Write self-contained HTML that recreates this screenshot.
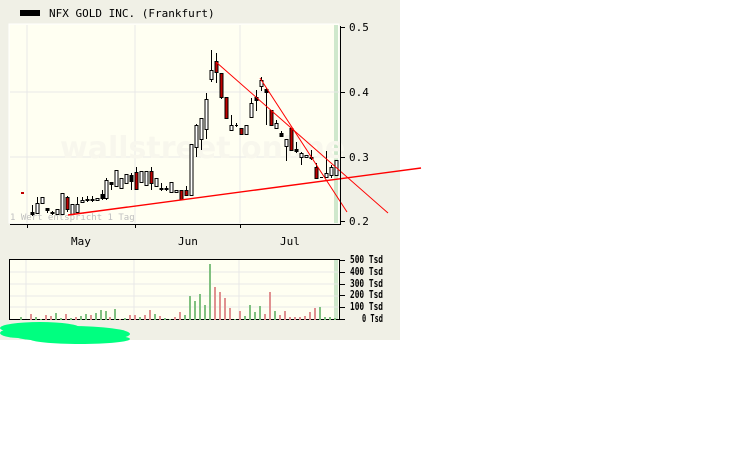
<!DOCTYPE html>
<html><head><meta charset="utf-8"><style>
html,body{margin:0;padding:0;background:#fff;width:738px;height:475px;overflow:hidden}
svg{display:block}
text{font-family:"DejaVu Sans Mono","Liberation Mono",monospace;font-size:11px;fill:#000}
</style></head><body>
<svg width="738" height="475" viewBox="0 0 738 475" xmlns="http://www.w3.org/2000/svg">
<rect x="0" y="0" width="400" height="340" fill="#f0f0e6"/>
<rect x="20" y="10" width="20" height="6" fill="#000"/>
<text x="49" y="17">NFX GOLD INC. (Frankfurt)</text>
<!-- price panel -->
<rect x="9" y="24" width="330" height="199" fill="#fffff2" stroke="#fff" stroke-width="1"/>
<rect x="334" y="25" width="4" height="198" fill="#cfe8cc"/>
<g stroke="#e8e8e8" stroke-width="1" shape-rendering="crispEdges">
<line x1="27" y1="25" x2="27" y2="223"/><line x1="135" y1="25" x2="135" y2="223"/><line x1="240" y1="25" x2="240" y2="223"/>
<line x1="10" y1="92" x2="339" y2="92"/><line x1="10" y1="157" x2="339" y2="157"/>
</g>
<text x="60" y="158" style="font-family:'DejaVu Sans','Liberation Sans',sans-serif;font-size:30px;font-weight:bold;fill:#f8f7ed">wallstreet online</text>
<text x="10" y="220" style="font-size:9px;fill:#c0c0c0">1 Wert entspricht 1 Tag</text>
<g shape-rendering="crispEdges" stroke="#000" stroke-width="1">
<rect x="21.5" y="192.5" width="2" height="1" fill="#c00000" stroke="#c00000"/>
<line x1="32.5" y1="205" x2="32.5" y2="216"/><rect x="31" y="212.5" width="3" height="2" fill="#000"/>
<line x1="37.5" y1="197" x2="37.5" y2="214"/><rect x="36" y="203.5" width="3" height="10" fill="#fff"/>
<rect x="41" y="197.5" width="3" height="6" fill="#fff"/>
<line x1="47.5" y1="208" x2="47.5" y2="213"/><rect x="46" y="208.5" width="3" height="2" fill="#000"/>
<line x1="52.5" y1="211" x2="52.5" y2="215"/><rect x="51" y="212.5" width="3" height="1" fill="#000"/>
<rect x="56" y="209.5" width="3" height="5" fill="#fff"/>
<rect x="61" y="193.5" width="3" height="21" fill="#fff"/>
<line x1="67.5" y1="196" x2="67.5" y2="212"/><rect x="66" y="197.5" width="3" height="12" fill="#c00000"/>
<rect x="71" y="204.5" width="3" height="10" fill="#fff"/>
<line x1="77.5" y1="197" x2="77.5" y2="213"/><rect x="76" y="204.5" width="3" height="8" fill="#fff"/>
<line x1="82.5" y1="197" x2="82.5" y2="203"/><rect x="81" y="200.5" width="3" height="2" fill="#fff"/>
<line x1="87.5" y1="196" x2="87.5" y2="202"/><rect x="86" y="199.5" width="3" height="1" fill="#000"/>
<line x1="92.5" y1="196" x2="92.5" y2="202"/><rect x="91" y="199.5" width="3" height="1" fill="#000"/>
<rect x="96" y="198.5" width="3" height="2" fill="#fff"/>
<line x1="102.5" y1="190" x2="102.5" y2="200"/><rect x="101" y="194.5" width="3" height="4" fill="#000"/>
<line x1="106.5" y1="178" x2="106.5" y2="200"/><rect x="105" y="180.5" width="3" height="18" fill="#fff"/>
<line x1="111.5" y1="182" x2="111.5" y2="190"/><rect x="110" y="182.5" width="3" height="2" fill="#000"/>
<rect x="115" y="170.5" width="3" height="16" fill="#fff"/>
<rect x="120" y="178.5" width="3" height="10" fill="#fff"/>
<rect x="125" y="174.5" width="3" height="9" fill="#fff"/>
<line x1="131.5" y1="173" x2="131.5" y2="190"/><rect x="130" y="175.5" width="3" height="6" fill="#000"/>
<line x1="136.5" y1="167" x2="136.5" y2="190"/><rect x="135" y="172.5" width="3" height="17" fill="#c00000"/>
<rect x="140" y="171.5" width="3" height="11" fill="#fff"/>
<rect x="145" y="171.5" width="3" height="14" fill="#fff"/>
<line x1="151.5" y1="167" x2="151.5" y2="190"/><rect x="150" y="171.5" width="3" height="12" fill="#c00000"/>
<rect x="155" y="178.5" width="3" height="8" fill="#fff"/>
<line x1="161.5" y1="183" x2="161.5" y2="191"/><rect x="160" y="188.5" width="3" height="1" fill="#000"/>
<line x1="166.5" y1="186" x2="166.5" y2="191"/><rect x="165" y="188.5" width="3" height="1" fill="#000"/>
<rect x="170" y="182.5" width="3" height="10" fill="#fff"/>
<rect x="175" y="190.5" width="3" height="2" fill="#fff"/>
<line x1="181.5" y1="190" x2="181.5" y2="200"/><rect x="180" y="190.5" width="3" height="9" fill="#c00000"/>
<line x1="186.5" y1="186" x2="186.5" y2="196"/><rect x="185" y="190.5" width="3" height="5" fill="#c00000"/>
<rect x="190" y="144.5" width="3" height="51" fill="#fff"/>
<line x1="196.5" y1="124" x2="196.5" y2="157"/><rect x="195" y="125.5" width="3" height="22" fill="#fff"/>
<line x1="201.5" y1="118" x2="201.5" y2="150"/><rect x="200" y="118.5" width="3" height="21" fill="#fff"/>
<line x1="206.5" y1="93" x2="206.5" y2="139"/><rect x="205" y="99.5" width="3" height="30" fill="#fff"/>
<line x1="211.5" y1="50" x2="211.5" y2="82"/><rect x="210" y="70.5" width="3" height="9" fill="#fff"/>
<line x1="216.5" y1="53" x2="216.5" y2="83"/><rect x="215" y="61.5" width="3" height="11" fill="#c00000"/>
<line x1="221.5" y1="73" x2="221.5" y2="99"/><rect x="220" y="73.5" width="3" height="24" fill="#c00000"/>
<rect x="225" y="97.5" width="3" height="21" fill="#c00000"/>
<line x1="231.5" y1="115" x2="231.5" y2="131"/><rect x="230" y="125.5" width="3" height="5" fill="#fff"/>
<line x1="236.5" y1="123" x2="236.5" y2="127"/><line x1="235" y1="125.5" x2="238" y2="125.5"/>
<rect x="240" y="128.5" width="3" height="6" fill="#c00000"/>
<rect x="245" y="125.5" width="3" height="9" fill="#fff"/>
<line x1="251.5" y1="98" x2="251.5" y2="117"/><rect x="250" y="103.5" width="3" height="14" fill="#fff"/>
<line x1="256.5" y1="90" x2="256.5" y2="111"/><rect x="255" y="97.5" width="3" height="3" fill="#000"/>
<line x1="261.5" y1="77" x2="261.5" y2="91"/><rect x="260" y="80.5" width="3" height="6" fill="#fff"/>
<line x1="266.5" y1="88" x2="266.5" y2="125"/><rect x="265" y="89.5" width="3" height="3" fill="#000"/>
<rect x="270" y="110.5" width="3" height="15" fill="#c00000"/>
<line x1="276.5" y1="120" x2="276.5" y2="128"/><rect x="275" y="123.5" width="3" height="5" fill="#fff"/>
<line x1="281.5" y1="131" x2="281.5" y2="137"/><rect x="280" y="133.5" width="3" height="3" fill="#000"/>
<line x1="286.5" y1="139" x2="286.5" y2="161"/><rect x="285" y="139.5" width="3" height="7" fill="#fff"/>
<rect x="290" y="128.5" width="3" height="22" fill="#c00000"/>
<line x1="296.5" y1="142" x2="296.5" y2="153"/><rect x="295" y="149.5" width="3" height="2" fill="#000"/>
<line x1="301.5" y1="152" x2="301.5" y2="165"/><rect x="300" y="153.5" width="3" height="4" fill="#fff"/>
<rect x="305" y="155.5" width="3" height="2" fill="#fff"/>
<line x1="311.5" y1="150" x2="311.5" y2="160"/><rect x="310" y="157.5" width="3" height="1" fill="#000"/>
<line x1="316.5" y1="163" x2="316.5" y2="178"/><rect x="315" y="167.5" width="3" height="11" fill="#c00000"/>
<line x1="320" y1="177.5" x2="323" y2="177.5"/>
<line x1="326.5" y1="151" x2="326.5" y2="178"/><rect x="325" y="173.5" width="3" height="4" fill="#fff"/>
<line x1="331.5" y1="165" x2="331.5" y2="178"/><rect x="330" y="167.5" width="3" height="8" fill="#fff"/>
<rect x="335" y="160.5" width="3" height="15" fill="#fff"/>
</g>
<g stroke="#ff0000" fill="none">
<line x1="68" y1="215" x2="421" y2="168" stroke-width="1.4"/>
<line x1="216" y1="62" x2="388" y2="213"/>
<line x1="260" y1="78" x2="347" y2="212"/>
</g>
<g stroke="#000" shape-rendering="crispEdges">
<line x1="10" y1="224.5" x2="340" y2="224.5"/>
<line x1="340.5" y1="26" x2="340.5" y2="225"/>
<line x1="27.5" y1="224" x2="27.5" y2="228"/><line x1="135.5" y1="224" x2="135.5" y2="228"/><line x1="240.5" y1="224" x2="240.5" y2="228"/>
<line x1="340" y1="27.5" x2="345" y2="27.5"/><line x1="340" y1="92.5" x2="345" y2="92.5"/><line x1="340" y1="157.5" x2="345" y2="157.5"/><line x1="340" y1="221.5" x2="345" y2="221.5"/>
</g>
<text x="349" y="31">0.5</text><text x="349" y="96">0.4</text><text x="349" y="161">0.3</text><text x="349" y="225">0.2</text>
<text x="71" y="245">May</text><text x="178" y="245">Jun</text><text x="280" y="245">Jul</text>
<!-- volume panel -->
<rect x="9.5" y="259.5" width="330" height="60" fill="#fffff2" stroke="#000"/>
<rect x="334" y="260" width="4" height="59" fill="#cfe8cc"/>
<g stroke="#e8e8e8" shape-rendering="crispEdges">
<line x1="26" y1="260" x2="26" y2="319"/><line x1="134" y1="260" x2="134" y2="319"/><line x1="239" y1="260" x2="239" y2="319"/>
<line x1="10" y1="272" x2="339" y2="272"/><line x1="10" y1="284" x2="339" y2="284"/><line x1="10" y1="296" x2="339" y2="296"/><line x1="10" y1="307" x2="339" y2="307"/>
</g>
<g shape-rendering="crispEdges">
<g fill="#80c080">
<rect x="20" y="317" width="2" height="3"/><rect x="35" y="317" width="2" height="3"/><rect x="40" y="319" width="2" height="1"/><rect x="55" y="313" width="2" height="7"/><rect x="60" y="318" width="2" height="2"/><rect x="70" y="318" width="2" height="2"/><rect x="80" y="316" width="2" height="4"/><rect x="85" y="314" width="2" height="6"/><rect x="95" y="313" width="2" height="7"/><rect x="100" y="310" width="2" height="10"/><rect x="105" y="311" width="2" height="9"/><rect x="114" y="309" width="2" height="11"/><rect x="124" y="318" width="2" height="2"/><rect x="139" y="317" width="2" height="3"/><rect x="154" y="314" width="2" height="6"/><rect x="164" y="318" width="2" height="2"/><rect x="169" y="319" width="2" height="1"/><rect x="184" y="315" width="2" height="5"/><rect x="189" y="296" width="2" height="24"/><rect x="194" y="301" width="2" height="19"/><rect x="199" y="294" width="2" height="26"/><rect x="204" y="305" width="2" height="15"/><rect x="209" y="264" width="2" height="56"/><rect x="234" y="319" width="2" height="1"/><rect x="244" y="316" width="2" height="4"/><rect x="249" y="305" width="2" height="15"/><rect x="254" y="312" width="2" height="8"/><rect x="259" y="306" width="2" height="14"/><rect x="274" y="311" width="2" height="9"/><rect x="319" y="307" width="2" height="13"/><rect x="324" y="317" width="2" height="3"/><rect x="329" y="317" width="2" height="3"/><rect x="334" y="318" width="2" height="2"/>
</g>
<g fill="#e09090">
<rect x="30" y="314" width="2" height="6"/><rect x="45" y="315" width="2" height="5"/><rect x="50" y="316" width="2" height="4"/><rect x="65" y="314" width="2" height="6"/><rect x="75" y="317" width="2" height="3"/><rect x="90" y="315" width="2" height="5"/><rect x="109" y="317" width="2" height="3"/><rect x="119" y="319" width="2" height="1"/><rect x="129" y="315" width="2" height="5"/><rect x="134" y="315" width="2" height="5"/><rect x="144" y="315" width="2" height="5"/><rect x="149" y="310" width="2" height="10"/><rect x="159" y="316" width="2" height="4"/><rect x="174" y="317" width="2" height="3"/><rect x="179" y="312" width="2" height="8"/><rect x="214" y="287" width="2" height="33"/><rect x="219" y="292" width="2" height="28"/><rect x="224" y="298" width="2" height="22"/><rect x="229" y="308" width="2" height="12"/><rect x="239" y="311" width="2" height="9"/><rect x="264" y="314" width="2" height="6"/><rect x="269" y="292" width="2" height="28"/><rect x="279" y="315" width="2" height="5"/><rect x="284" y="311" width="2" height="9"/><rect x="289" y="317" width="2" height="3"/><rect x="294" y="317" width="2" height="3"/><rect x="299" y="317" width="2" height="3"/><rect x="304" y="316" width="2" height="4"/><rect x="309" y="312" width="2" height="8"/><rect x="314" y="308" width="2" height="12"/>
</g>
</g>
<g stroke="#000" shape-rendering="crispEdges">
<line x1="340" y1="260.5" x2="345" y2="260.5"/><line x1="340" y1="272.5" x2="345" y2="272.5"/><line x1="340" y1="284.5" x2="345" y2="284.5"/><line x1="340" y1="295.5" x2="345" y2="295.5"/><line x1="340" y1="307.5" x2="345" y2="307.5"/><line x1="340" y1="319.5" x2="345" y2="319.5"/>
</g>
<g style="font-size:8px;font-weight:bold">
<text x="350" y="263" textLength="33" lengthAdjust="spacingAndGlyphs">500 Tsd</text>
<text x="350" y="275" textLength="33" lengthAdjust="spacingAndGlyphs">400 Tsd</text>
<text x="350" y="287" textLength="33" lengthAdjust="spacingAndGlyphs">300 Tsd</text>
<text x="350" y="298" textLength="33" lengthAdjust="spacingAndGlyphs">200 Tsd</text>
<text x="350" y="310" textLength="33" lengthAdjust="spacingAndGlyphs">100 Tsd</text>
<text x="362" y="322" textLength="21" lengthAdjust="spacingAndGlyphs">0 Tsd</text>
</g>
<!-- green scribble -->
<g fill="#00ff80">
<ellipse cx="40" cy="328" rx="40" ry="6"/>
<ellipse cx="70" cy="334" rx="60" ry="8"/>
<ellipse cx="80" cy="339" rx="50" ry="5"/>
<ellipse cx="20" cy="333" rx="20" ry="5"/>
</g>
</svg>
</body></html>
